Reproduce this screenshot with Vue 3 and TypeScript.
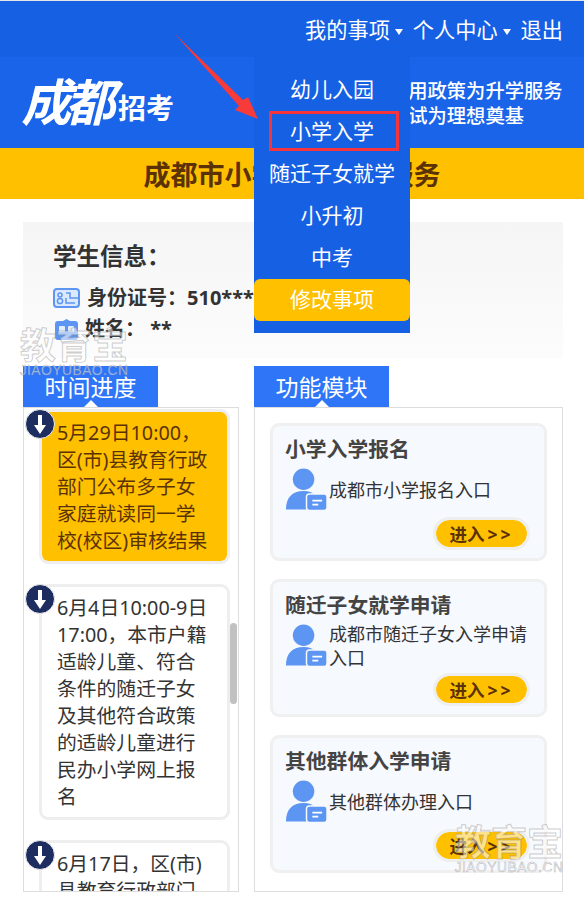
<template>
  <div class="page">
    <header class="topbar">
      <nav class="topnav">
        <span>我的事项<i class="caret"></i></span>
        <span>个人中心<i class="caret"></i></span>
        <span>退出</span>
      </nav>
    </header>

    <section class="banner">
      <div class="logo">
        <span class="logo-art">成都</span>
        <span class="logo-text">招考</span>
      </div>
      <div class="slogan">
        <p>善用政策为升学服务</p>
        <p>应试为理想奠基</p>
      </div>
    </section>

    <h1 class="service-title">成都市小学入学报名服务</h1>

    <section class="student">
      <h2>学生信息：</h2>
      <div class="student-row">
        <svg class="row-icon" viewBox="0 0 27 20">
          <rect x="1" y="1" width="25" height="18" rx="3" fill="#dbe8fd" stroke="#5d96f2" stroke-width="2" />
          <circle cx="7" cy="7" r="2" fill="none" stroke="#5d96f2" stroke-width="1.5" />
          <circle cx="7" cy="13" r="2.6" fill="none" stroke="#5d96f2" stroke-width="1.5" />
          <path d="M13 5h4v5h8M13 10v5h9" fill="none" stroke="#5d96f2" stroke-width="1.5" />
        </svg>
        <span>身份证号：510***</span>
      </div>
      <div class="student-row name-row">
        <svg class="row-icon" viewBox="0 0 25 22">
          <path d="M4 3h5l3.500-2 3.500 2h5a3 3 0 0 1 3 3v13a3 3 0 0 1-3 3H4a3 3 0 0 1-3-3V6a3 3 0 0 1 3-3z" fill="#5d96f2" />
          <rect x="5" y="8" width="6" height="6" rx="1" fill="#e3edfd" />
          <rect x="14" y="8" width="6" height="6" rx="1" fill="#e3edfd" />
        </svg>
        <span>姓名： **</span>
      </div>
    </section>

    <main class="columns">
      <section class="col col-time">
        <h3 class="tab">时间进度</h3>
        <div class="panel time-panel">
          <article
            v-for="(item, i) in timeline"
            :key="i"
            class="time-card"
            :class="{ active: i === 0 }"
          >
            <span class="badge">
              <svg viewBox="0 0 12 19" width="12" height="19">
                <path d="M4 0h4v10h4l-6 9-6-9h4z" fill="#fff" />
              </svg>
            </span>
            <p v-for="line in item" :key="line">{{ line }}</p>
          </article>
          <span class="scroll-thumb"></span>
        </div>
      </section>

      <section class="col col-func">
        <h3 class="tab">功能模块</h3>
        <div class="panel func-panel">
          <article v-for="mod in modules" :key="mod.title" class="func-card">
            <h4>{{ mod.title }}</h4>
            <div class="func-body">
              <svg class="person" viewBox="0 0 44 43">
                <circle cx="19" cy="11" r="11" fill="#5d96f2" />
                <path d="M1 42c0-12 6-19 18-19 6 0 10 2 13 5h-8v14z" fill="#5d96f2" />
                <rect x="22" y="26" width="21" height="17" rx="3" fill="#5d96f2" stroke="#f6f9fe" stroke-width="1.500" />
                <path d="M28 33h10M28 37h6" stroke="#fff" stroke-width="1.800" />
              </svg>
              <p>{{ mod.desc }}</p>
            </div>
            <div class="func-action">
              <button type="button"><b>进入</b><span class="chevrons">&gt;&gt;</span></button>
            </div>
          </article>
        </div>
      </section>
    </main>

    <ul class="dropdown">
      <li v-for="item in menu" :key="item" :class="{ edit: item === '修改事项', marked: item === '小学入学' }">
        {{ item }}
      </li>
    </ul>

    <svg class="pointer" viewBox="0 0 100 100" width="100" height="100">
      <polygon points="4,3 73,70 78,67 88,89 65,80 69,76" fill="#f73a3a" />
    </svg>

    <div class="watermark wm-one"><strong>教育宝</strong><span>JIAOYUBAO.CN</span></div>
    <div class="watermark wm-two"><strong>教育宝</strong><span>JIAOYUBAO.CN</span></div>
  </div>
</template>

<script setup lang="ts">
interface FuncModule {
  title: string
  desc: string
}

const menu: string[] = ['幼儿入园', '小学入学', '随迁子女就学', '小升初', '中考', '修改事项']

const timeline: string[][] = [
  ['5月29日10:00，', '区(市)县教育行政', '部门公布多子女', '家庭就读同一学', '校(校区)审核结果'],
  ['6月4日10:00-9日', '17:00，本市户籍', '适龄儿童、符合', '条件的随迁子女', '及其他符合政策', '的适龄儿童进行', '民办小学网上报', '名'],
  ['6月17日，区(市)', '县教育行政部门', '公布审核结果']
]

const modules: FuncModule[] = [
  { title: '小学入学报名', desc: '成都市小学报名入口' },
  { title: '随迁子女就学申请', desc: '成都市随迁子女入学申请入口' },
  { title: '其他群体入学申请', desc: '其他群体办理入口' }
]
</script>

<style>
html,
body {
  margin: 0;
  background: #fff;
}
</style>

<style scoped>
.page {
  position: relative;
  height: 897px;
  overflow: hidden;
  background: #fff;
  color: #333;
  font-family: "Noto Sans", "Noto Sans CJK SC", sans-serif;
}

p,
h1,
h2,
h3,
h4,
ul {
  margin: 0;
  padding: 0;
}

.topbar {
  height: 56px;
  border-top: 1px solid #e6e6e6;
  background: #1660e4;
}

.topnav {
  display: flex;
  justify-content: flex-end;
  gap: 10px;
  padding-right: 21px;
  color: #fff;
  font-size: 21.200px;
  line-height: 58px;
}

.caret {
  display: inline-block;
  width: 0;
  height: 0;
  margin-left: 5px;
  vertical-align: 3px;
  border-top: 6px solid #fff;
  border-left: 4px solid transparent;
  border-right: 4px solid transparent;
}

.banner {
  display: flex;
  align-items: center;
  justify-content: space-between;
  height: 91px;
  padding: 0 21px 0 26px;
  background: #1a64ea;
  color: #fff;
}

.logo {
  display: flex;
  align-items: flex-end;
  height: 62px;
  margin-top: -2px;
}

.logo-art {
  font-size: 50px;
  font-weight: 700;
  line-height: 62px;
  letter-spacing: -6px;
  transform: skewX(-14deg);
}

.logo-text {
  margin: 0 0 4px 4px;
  font-size: 28px;
  font-weight: 700;
  line-height: 42px;
}

.slogan {
  width: 174px;
  font-size: 19.300px;
  font-weight: 500;
  line-height: 25px;
  white-space: nowrap;
}

.service-title {
  height: 51px;
  background: #ffc000;
  color: #5b3206;
  font-size: 27px;
  font-weight: 700;
  line-height: 53px;
  text-align: center;
}

.student {
  height: 136px;
  box-sizing: border-box;
  margin: 23px 21px 8px 23px;
  padding: 17px 30px 0;
  background: linear-gradient(#f5f5f5, #fcfcfc);
}

.student h2 {
  font-size: 23.500px;
  font-weight: 700;
  line-height: 34px;
}

.student-row {
  display: flex;
  align-items: center;
  gap: 7px;
  margin-top: 10px;
  font-size: 20px;
  font-weight: 700;
  line-height: 30px;
}

.name-row {
  gap: 5px;
  margin-top: 1px;
}

.row-icon {
  width: 27px;
  height: 22px;
  flex: none;
}

.columns {
  display: flex;
  gap: 15px;
  padding: 0 21px 0 23px;
}

.col-time {
  width: 216px;
}

.col-func {
  flex: 1;
}

.tab {
  position: relative;
  width: 135px;
  height: 41px;
  background: #2e75f8;
  color: #fff;
  font-size: 23px;
  font-weight: 400;
  line-height: 42px;
  text-align: center;
}

.tab::after {
  content: "";
  position: absolute;
  left: 50%;
  bottom: 0;
  margin-left: -7px;
  border-bottom: 7px solid #fff;
  border-left: 7px solid transparent;
  border-right: 7px solid transparent;
}

.panel {
  position: relative;
  box-sizing: border-box;
  height: 485px;
  overflow: hidden;
  border: 1px solid #ddd;
}

.time-panel {
  padding: 1px 0 0 15px;
}

.time-card {
  position: relative;
  box-sizing: border-box;
  width: 191px;
  margin-bottom: 20px;
  padding: 7px 6px 7px 15px;
  border: 3px solid #eee;
  border-radius: 9px;
  background: #fff;
  color: #333;
  font-size: 19.800px;
  line-height: 27px;
  white-space: nowrap;
}

.time-card.active {
  background: #ffc000;
  background-clip: padding-box;
  color: #5b3206;
}

.badge {
  position: absolute;
  top: -3px;
  left: -17px;
  display: flex;
  align-items: center;
  justify-content: center;
  box-sizing: content-box;
  width: 28px;
  height: 28px;
  border: 1.500px solid #eee;
  border-radius: 50%;
  background: #1e2d5f;
}

.scroll-thumb {
  position: absolute;
  top: 215px;
  right: 1px;
  width: 7px;
  height: 81px;
  border-radius: 4px;
  background: #c1c1c1;
}

.func-panel {
  display: flex;
  flex-direction: column;
  gap: 18px;
  padding: 15px 15px 0;
}

.func-card {
  box-sizing: border-box;
  width: 277px;
  height: 138px;
  padding: 8px 12px 0;
  border: 3px solid #f0f0f0;
  border-radius: 9px;
  background: #f6f9fe;
}

.func-card h4 {
  color: #444;
  font-size: 20.800px;
  font-weight: 700;
  line-height: 30px;
}

.func-body {
  display: flex;
  align-items: center;
  gap: 1px;
  height: 43px;
  margin: 4px 0 6px;
  font-size: 18px;
  line-height: 24px;
}

.func-body p {
  width: 205px;
}

.person {
  width: 43px;
  height: 43px;
  flex: none;
}

.func-action {
  display: flex;
  justify-content: flex-end;
  margin-right: 2px;
}

.func-action button {
  width: 97px;
  height: 33px;
  padding: 0;
  border: 3px solid #eee;
  border-radius: 17px;
  background: #ffc000;
  background-clip: padding-box;
  color: #5b3206;
  font-family: inherit;
  font-size: 17.500px;
  line-height: 26px;
}

.chevrons {
  margin-left: 3px;
  font-weight: 700;
  letter-spacing: 3px;
}

.dropdown {
  position: absolute;
  top: 57px;
  left: 254px;
  width: 156px;
  height: 276px;
  box-sizing: border-box;
  padding-top: 12px;
  background: #1660e4;
  list-style: none;
}

.dropdown li {
  position: relative;
  height: 42px;
  color: #fff;
  font-size: 21px;
  line-height: 41px;
  text-align: center;
  white-space: nowrap;
}

.dropdown li.edit {
  border-radius: 6px;
  background: #ffc000;
}

.dropdown li.marked::after {
  content: "";
  position: absolute;
  top: 0;
  left: 15px;
  width: 130px;
  height: 40px;
  box-sizing: border-box;
  border: 3px solid #f5343c;
}

.pointer {
  position: absolute;
  top: 30px;
  left: 170px;
}

.watermark {
  position: absolute;
  display: flex;
  flex-direction: column;
  align-items: center;
  width: 110px;
  color: rgba(255, 255, 255, 0.55);
  pointer-events: none;
}

.watermark strong {
  font-size: 36px;
  font-weight: 700;
  line-height: 36px;
  -webkit-text-stroke: 1px rgba(130, 130, 130, 0.4);
}

.watermark span {
  font-family: "Liberation Sans", sans-serif;
  font-size: 13.800px;
  line-height: 14px;
  letter-spacing: 0.500px;
  white-space: nowrap;
  -webkit-text-stroke: 0.500px rgba(130, 130, 130, 0.6);
}

.wm-one {
  top: 328px;
  left: 19px;
}

.wm-two {
  top: 825px;
  left: 454px;
}
</style>
